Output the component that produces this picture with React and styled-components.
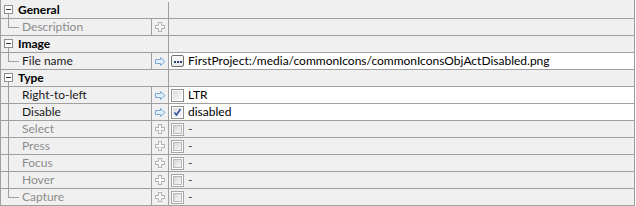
import React from 'react'
import styled, { createGlobalStyle } from 'styled-components'

const GlobalStyle = createGlobalStyle`
  body {
    margin: 0;
    background: #ffffff;
  }
`;

const groups = [
  { title: 'General', rows: [{ name: 'Description', disabled: true }] },
  {
    title: 'Image',
    rows: [{ name: 'File name', file: 'FirstProject:/media/commonIcons/commonIconsObjActDisabled.png' }],
  },
  {
    title: 'Type',
    rows: [
      { name: 'Right-to-left', check: false, text: 'LTR' },
      { name: 'Disable', check: true, text: 'disabled' },
      { name: 'Select', disabled: true, check: false, text: '-' },
      { name: 'Press', disabled: true, check: false, text: '-' },
      { name: 'Focus', disabled: true, check: false, text: '-' },
      { name: 'Hover', disabled: true, check: false, text: '-' },
      { name: 'Capture', disabled: true, check: false, text: '-' },
    ],
  },
];

const LINE = '#a0a0a0';

const Frame = styled.div`
  width: 635px;
  box-sizing: border-box;
  padding-top: 2px;
  background: #f0f0f0;
  border-left: 1px solid ${LINE};
  border-right: 1px solid ${LINE};
  font-family: Lato, "Open Sans", "Liberation Sans", sans-serif;
  font-size: 12px;
`;

const HeaderRow = styled.div`
  display: grid;
  grid-template-columns: 168px 1fr;
  height: 17px;
  box-sizing: border-box;
  border-bottom: 1px solid ${LINE};
`;

const HeaderCell = styled.div`
  display: flex;
  align-items: center;
  border-right: 1px solid ${LINE};
  font-weight: bold;
  color: #000;
  line-height: 16px;
  gap: 2px;
`;

const Row = styled.div`
  display: grid;
  grid-template-columns: 151px 17px 1fr;
  height: 17px;
  box-sizing: border-box;
  border-bottom: 1px solid ${LINE};
`;

const NameCell = styled.div`
  display: flex;
  align-items: center;
  border-right: 1px solid ${LINE};
  line-height: 16px;
  color: ${p => (p.$disabled ? '#8c8c8c' : '#1a1a1a')};
  white-space: nowrap;
  overflow: hidden;
`;

const MarkCell = styled.div`
  display: flex;
  align-items: center;
  justify-content: center;
  border-right: 1px solid ${LINE};
`;

const ValueCell = styled.div`
  display: flex;
  align-items: center;
  gap: 4px;
  padding-left: 2px;
  background: ${p => (p.$disabled ? '#f0f0f0' : '#ffffff')};
  color: #000;
  line-height: 16px;
  white-space: nowrap;
`;

const DimText = styled.span`
  color: #3a3a3a;
`;

const Gutter = styled.svg`
  flex: none;
  display: block;
`;

function Branch({ last }) {
  return (
    <Gutter width="21" height="16" shapeRendering="crispEdges">
      {last ? (
        <>
          <line x1="7.5" y1="0" x2="7.5" y2="8.5" stroke={LINE} />
          <line x1="7" y1="8.5" x2="18" y2="8.5" stroke={LINE} />
        </>
      ) : (
        <line x1="7.5" y1="0" x2="7.5" y2="16" stroke={LINE} />
      )}
    </Gutter>
  );
}

function ExpandBox() {
  return (
    <Gutter width="15" height="16" shapeRendering="crispEdges">
      <rect x="3.5" y="3.5" width="8" height="8" fill="#fff" stroke="#8e8e8e" />
      <line x1="5" y1="7.5" x2="10" y2="7.5" stroke="#333" />
      <line x1="7.5" y1="12" x2="7.5" y2="16" stroke={LINE} />
    </Gutter>
  );
}

function ArrowIcon() {
  return (
    <svg width="11" height="9" viewBox="0 0 11 9">
      <path
        d="M0.5 2.5 H5.5 V0.5 L10 4.5 L5.5 8.5 V6.5 H0.5 Z"
        fill="#e2eefb"
        stroke="#7aa7d8"
        strokeLinejoin="round"
      />
    </svg>
  );
}

function PlusIcon() {
  return (
    <svg width="11" height="11" viewBox="0 0 11 11" shapeRendering="crispEdges">
      <path
        d="M3.5 0.5 H6.5 V3.5 H9.5 V6.5 H6.5 V9.5 H3.5 V6.5 H0.5 V3.5 H3.5 Z"
        fill="#fafafa"
        stroke="#b4b4b4"
      />
    </svg>
  );
}

const DotsButton = styled.span`
  flex: none;
  width: 13px;
  height: 12px;
  box-sizing: border-box;
  border: 1px solid #707070;
  border-radius: 2px;
  background: linear-gradient(#ffffff, #e6e6e6);
  display: flex;
  align-items: center;
  justify-content: center;
  gap: 1px;
  padding-top: 1px;
  & i {
    width: 2px;
    height: 2px;
    background: #1e3f7a;
  }
`;

const Box = styled.span`
  flex: none;
  width: 13px;
  height: 13px;
  box-sizing: border-box;
  border: 1px solid ${p => (p.$disabled ? '#a6a6a6' : '#8f8f8f')};
  padding: 1px;
  background: #fff;
  & > span {
    display: block;
    width: 100%;
    height: 100%;
    box-sizing: border-box;
    border: ${p => (p.$disabled ? '1px solid #b8b8b8' : 'none')};
    background: ${p =>
      p.$disabled ? 'linear-gradient(135deg, #d6d6d6, #f8f8f8)' : 'linear-gradient(135deg, #dcdcdc, #fbfbfb)'};
    position: relative;
  }
  & svg {
    position: absolute;
    left: 0;
    top: 0;
  }
`;

function CheckBox({ checked, disabled }) {
  return (
    <Box $disabled={disabled}>
      <span>
        {checked && (
          <svg width="9" height="9" viewBox="0 0 9 9">
            <path d="M1.5 4.5 L3.5 7 L7.5 1" fill="none" stroke="#2f55a6" strokeWidth="1.6" />
          </svg>
        )}
      </span>
    </Box>
  );
}

function PropRow({ row, last }) {
  return (
    <Row>
      <NameCell $disabled={row.disabled}>
        <Branch last={last} />
        {row.name}
      </NameCell>
      <MarkCell>{row.disabled ? <PlusIcon /> : <ArrowIcon />}</MarkCell>
      <ValueCell $disabled={row.disabled}>
        {row.file && (
          <>
            <DotsButton>
              <i />
              <i />
              <i />
            </DotsButton>
            {row.file}
          </>
        )}
        {row.check !== undefined && <CheckBox checked={row.check} disabled={row.disabled} />}
        {row.text && (row.disabled ? <DimText>{row.text}</DimText> : row.text)}
      </ValueCell>
    </Row>
  );
}

export default function App() {
  return (
    <>
      <GlobalStyle />
      <Frame>
        {groups.map(g => (
          <React.Fragment key={g.title}>
            <HeaderRow>
              <HeaderCell>
                <ExpandBox />
                {g.title}
              </HeaderCell>
              <div />
            </HeaderRow>
            {g.rows.map((r, i) => (
              <PropRow key={r.name} row={r} last={i === g.rows.length - 1} />
            ))}
          </React.Fragment>
        ))}
      </Frame>
    </>
  );
}
